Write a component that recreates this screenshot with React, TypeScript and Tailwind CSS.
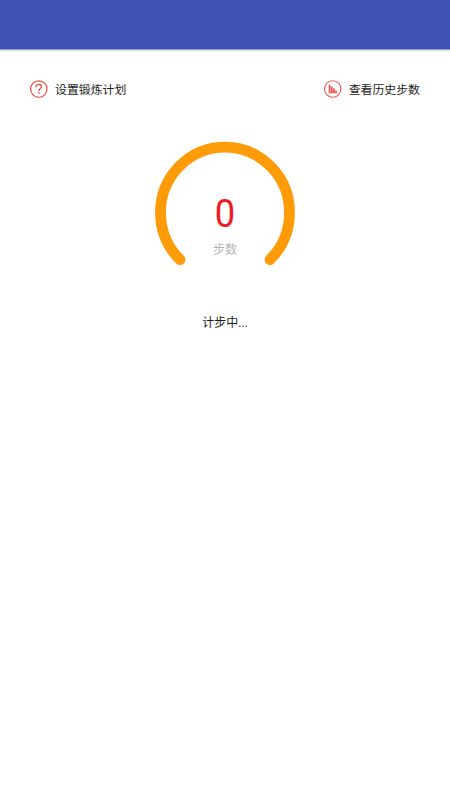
const sans = "font-['Roboto','Noto_Sans_CJK_SC',sans-serif]";

function HelpIcon() {
  return (
    <svg width="18" height="18" viewBox="0 0 18 18" fill="none" stroke="#ee4540">
      <circle cx="8.8" cy="9" r="8.2" strokeWidth="1.15" />
      <path d="M6 7.2C6 5.1 7.1 4.3 8.7 4.3s2.7 1 2.7 2.5c0 1.9-2.6 2-2.6 4.2" strokeWidth="1.3" />
      <path d="M8.8 12.3v1.5" strokeWidth="1.5" />
    </svg>
  );
}

function HistoryIcon() {
  return (
    <svg width="18" height="18" viewBox="0 0 18 18" fill="none" stroke="#ee5a55">
      <circle cx="8.7" cy="9" r="8.2" strokeWidth="1.1" />
      <path d="M5.6 4.4v8.7M7.8 6.6v6.5M9.9 8.6v4.5M12 10.6v2.5" strokeWidth="1.8" />
      <path d="M4.7 12.9h8.7" strokeWidth="0.8" />
    </svg>
  );
}

export default function App() {
  return (
    <div className={`flex h-[800px] w-[450px] flex-col bg-white ${sans}`}>
      <header className="h-[50px] shrink-0 border-b border-[#919ace] bg-[#3f51b5]" />
      <div className="h-0.5 shrink-0 bg-[#ebebeb]" />

      <nav className="mt-7 flex h-[18px] items-center justify-between pl-[30px] pr-[30px] text-[11.9px] leading-[18px] text-[#1c1c1c]">
        <div className="flex items-center gap-[7px]">
          <HelpIcon />
          <span className="pt-0.5">设置锻炼计划</span>
        </div>
        <div className="flex items-center gap-[7px]">
          <HistoryIcon />
          <span className="pt-0.5">查看历史步数</span>
        </div>
      </nav>

      <main className="mt-[42px] flex flex-col items-center">
        <div className="grid h-[130px] w-[150px]">
          <svg className="col-start-1 row-start-1" width="150" height="130" viewBox="0 0 150 130" fill="none">
            <path
              d="M30 119.6A64.5 65.5 0 1 1 120 119.6"
              stroke="#ff9b08"
              strokeWidth="10.8"
              strokeLinecap="round"
            />
          </svg>
          <div className="col-start-1 row-start-1 flex flex-col items-center pt-[50px]">
            <span className="scale-x-[0.93] text-[39px] leading-[48px] text-[#ed1c24]">0</span>
            <span className="mt-[3px] text-[12px] leading-[18px] text-[#b4b4b4]">步数</span>
          </div>
        </div>
        <p className="mt-[44px] text-[12px] leading-[18px] text-[#1c1c1c]">计步中...</p>
      </main>
    </div>
  );
}
